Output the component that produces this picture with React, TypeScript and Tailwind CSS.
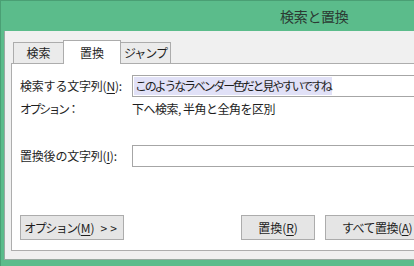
import React from 'react';

const font = { fontFamily: '"Noto Sans CJK JP", "Noto Sans", sans-serif' };

const Mn: React.FC<{ c: string }> = ({ c }) => <span className="underline underline-offset-2">{c}</span>;

const Btn: React.FC<{ className?: string; children: React.ReactNode }> = ({ className = '', children }) => (
  <button className={`h-[25px] border border-[#acacac] bg-[#e5e5e5] text-[12px] text-[#1e1e1e] flex items-center justify-center leading-none ${className}`}>
    {children}
  </button>
);

export default function App() {
  return (
    <div className="w-[414px] h-[266px] overflow-hidden bg-[#5bbc8b] border-l border-t border-[#4a9f74] flex flex-col" style={font}>
      {/* title bar */}
      <div className="h-[30px] shrink-0 flex items-center pl-[279px] text-[14px] tracking-[-0.3px] text-[#2b3a33]">検索と置換</div>

      {/* window body */}
      <div className="ml-[3px] w-[700px] h-[229px] bg-[#f0f0f0] border-l border-b border-[#9aa9a1] pl-[6px] pt-[9px]">
        {/* tabs */}
        <div className="flex items-end pl-[2px] text-[12px] text-[#1e1e1e]">
          <div className="w-[51px] h-[21px] border border-b-0 border-[#acacac] bg-[#ebebeb] flex items-center justify-center">検索</div>
          <div className="relative z-10 -mb-px w-[58px] h-[24px] border border-b-0 border-[#acacac] bg-white flex items-center justify-center -ml-px">置換</div>
          <div className="w-[50px] h-[21px] border border-b-0 border-l-0 border-[#acacac] bg-[#ebebeb] flex items-center justify-center tracking-[-1px]">ジャンプ</div>
        </div>

        {/* panel */}
        <div className="h-[188px] bg-white border border-[#adadad] pl-[8px] pt-[11px] text-[12px] text-[#1e1e1e]">
          <div className="flex items-center h-[22px]">
            <div className="w-[112px] shrink-0 tracking-[-0.2px]">検索する文字列(<Mn c="N" />):</div>
            <div className="w-[400px] h-[22px] border border-[#a6a6a6] flex items-center pl-px">
              <span className="bg-[#e1e1f7] h-[18px] flex items-center pl-px pr-[1px] tracking-[-2.2px]">このようなラベンダー色だと見やすいですね</span>
            </div>
          </div>
          <div className="flex items-center h-[18px] mt-[3px]">
            <div className="w-[112px] shrink-0 tracking-[-2.5px]">オプション：</div>
            <div className="tracking-[-0.5px]">下へ検索, 半角と全角を区別</div>
          </div>
          <div className="flex items-center h-[22px] mt-[27px]">
            <div className="w-[112px] shrink-0 tracking-[-0.2px]">置換後の文字列(<Mn c="I" />):</div>
            <div className="w-[400px] h-[22px] border border-[#a6a6a6]" />
          </div>
          <div className="flex items-center mt-[48px]">
            <Btn className="w-[104px]">
              <span className="tracking-[-1.5px]">オプション</span>(<Mn c="M" />)
              <span className="ml-[6px] tracking-[3px]">&gt;&gt;</span>
            </Btn>
            <Btn className="w-[74px] ml-[117px]">置換(<Mn c="R" />)</Btn>
            <Btn className="w-[104px] ml-[10px] tracking-[-0.5px]">すべて置換(<Mn c="A" />)</Btn>
          </div>
        </div>
      </div>
    </div>
  );
}
